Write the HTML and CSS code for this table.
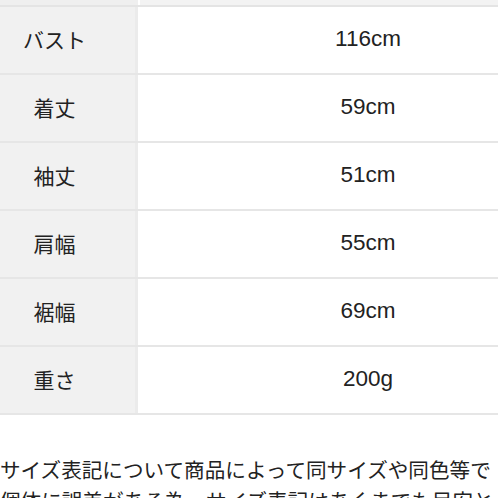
FILE: index.html
```html
<!DOCTYPE html>
<html lang="ja">
<head>
<meta charset="utf-8">
<link rel="stylesheet" href="styles.css">
</head>
<body>
<div class="page">
  <div class="size-table">
    <div class="top-strip"><div class="top-l"></div><div class="top-r"></div></div>
    <div class="row"><div class="label">バスト</div><div class="value">116cm</div></div>
    <div class="row"><div class="label">着丈</div><div class="value">59cm</div></div>
    <div class="row"><div class="label">袖丈</div><div class="value">51cm</div></div>
    <div class="row"><div class="label">肩幅</div><div class="value">55cm</div></div>
    <div class="row"><div class="label">裾幅</div><div class="value">69cm</div></div>
    <div class="row last"><div class="label">重さ</div><div class="value">200g</div></div>
  </div>
  <div class="note">
    <div class="line">サイズ表記について商品によって同サイズや同色等で</div>
    <div class="line">個体に誤差がある為、サイズ表記はあくまでも目安と</div>
  </div>
</div>
</body>
</html>
```
FILE: styles.css
```css
html, body {
  margin: 0;
  padding: 0;
  background: #ffffff;
  overflow: hidden;
  width: 498px;
  height: 498px;
}
.page {
  font-family: "Liberation Sans", "Noto Sans CJK JP", sans-serif;
  color: #222222;
}
.size-table {
  margin-left: -26px;
  width: 624px;
  display: flex;
  flex-direction: column;
}
.top-strip {
  display: grid;
  grid-template-columns: 164px 2px 1fr;
  height: 5px;
  border-bottom: 2px solid #e4e4e4;
}
.top-l { background: #efefef; }
.top-r { grid-column: 3; background: #f3f3f3; }
.row {
  display: grid;
  grid-template-columns: 164px 1fr;
  height: 66px;
  border-bottom: 2px solid #e6e6e6;
}
.label {
  background: #f1f1f1;
  border-right: 3px solid #ebebeb;
  display: flex;
  align-items: center;
  justify-content: center;
  font-family: "Noto Sans CJK JP", sans-serif;
  font-size: 21px;
  padding-bottom: 2px;
}
.value {
  display: flex;
  align-items: center;
  justify-content: center;
  font-size: 22.5px;
  padding-bottom: 2px;
}
.note {
  margin-top: 39px;
  font-family: "Noto Sans CJK JP", sans-serif;
  font-size: 20.6px;
  line-height: 31px;
  color: #222222;
}
.line {
  white-space: nowrap;
}
```
